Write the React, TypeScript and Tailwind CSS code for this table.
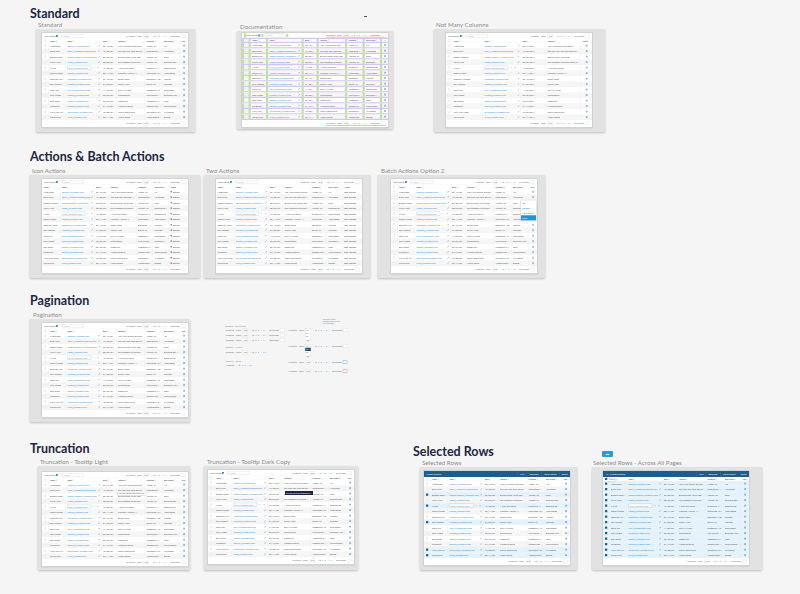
import React from 'react';
import { Search, Pencil, Check as CheckMark, X, Trash2, FileText, EllipsisVertical } from 'lucide-react';

type V = 'standard' | 'doc' | 'few' | 'icon' | 'two' | 'batch' | 'tipLight' | 'tipDark' | 'selected' | 'all';

type Col = { key: string; label: string; w: string };

const people = [
    ['Matt Simes', 'msimes@example.com', '05/19/2017', '123 Main Street, Building 4', 'Austin, TX', 'HR'],
    ['Brian Gary', 'bgary@longemailaddress.com', '12/28/2017', 'The Red and Gold Building on 5th Street', 'Long Beach, CA', 'Marketing'],
    ['Debbie Sanders', 'debbie.sanders@example.com', '06/06/2017', 'Burnet Road, Suite 200', 'Atlanta, GA', 'Sales'],
    ['Kevin Hess', 'khess@example.com', '08/09/2017', 'The Shoppes at Round Rock Plaza', 'Atlanta, GA', 'Business Development'],
    ['Li Feld', 'lfeld@example.com', '12/28/2017', '1 Pine Oak Drive', 'Evansville, IN', 'Engineering'],
    ['Sandra Lopez', 'slopez@example.com', '03/14/2017', 'Lakeside Avenue 44', 'Cincinnati, OH', 'Accounting'],
    ['Roberto Martinez', 'rmartinez@example.com', '07/12/2017', 'Beach Road', 'Baltimore, MD', 'Finance'],
    ['Ron Watson', 'rwatson@example.com', '01/30/2017', 'Cherry Lane', 'Dallas, TX', 'Facilities'],
    ['Steve Lee', 'slee@examplemail.com', '11/02/2017', 'Oak Hill Plaza', 'Scottsdale, AZ', 'Operations'],
    ['Tina Knight', 'tknight@example.com', '05/05/2017', 'Cornerstone', 'Fort Worth, TX', 'Business Analysis'],
    ['Dan Smith', 'dsmith@example.com', '09/22/2017', 'Ridgeview', 'Kingsport, TN', 'Legal'],
    ['Pat Doran', 'pdoran@example.com', '04/17/2017', 'Meadows Drive', 'Oregon City, OR', 'Procurement'],
    ['Mary Van Kamp', 'mvankamp@example.com', '10/08/2017', 'Cherry Boulevard', 'Columbus, OH', 'IT Support'],
    ['Carlos Ruiz', 'cruiz@example.com', '02/11/2017', 'Maple Street', 'Albuquerque, NM', 'Design'],
];

const colsStd: Col[] = [
    { key: 'chk', label: '', w: 'w-[26px]' },
    { key: 'name', label: 'Name', w: 'w-[70px]' },
    { key: 'email', label: 'Email', w: 'w-[142px]' },
    { key: 'date', label: 'Date', w: 'w-[60px]' },
    { key: 'addr', label: 'Address', w: 'w-[114px]' },
    { key: 'loc', label: 'Location', w: 'w-[70px]' },
    { key: 'group', label: 'Bus Group', w: 'w-[70px]' },
    { key: 'act', label: 'Action', w: 'flex-1' },
];

const colsFew: Col[] = [
    { key: 'chk', label: '', w: 'w-[24px]' },
    { key: 'name', label: 'Name', w: 'w-[124px]' },
    { key: 'email', label: 'Email', w: 'w-[152px]' },
    { key: 'date', label: 'Date', w: 'w-[100px]' },
    { key: 'addr', label: 'Address', w: 'w-[140px]' },
    { key: 'act', label: 'Action', w: 'flex-1' },
];

const colsAct: Col[] = [
    { key: 'name', label: 'Name', w: 'w-[74px]' },
    { key: 'email', label: 'Email', w: 'w-[136px]' },
    { key: 'date', label: 'Date', w: 'w-[58px]' },
    { key: 'addr', label: 'Address', w: 'w-[110px]' },
    { key: 'loc', label: 'Location', w: 'w-[66px]' },
    { key: 'group', label: 'Bus Group', w: 'w-[64px]' },
    { key: 'act', label: 'Action', w: 'flex-1' },
];

const Box = ({ on }: { on?: boolean }) => (
    <span className={on ? 'block w-[9px] h-[9px] rounded-[2px] bg-[#1f5b8e]' : 'block w-[9px] h-[9px] rounded-[2px] border border-[#c2c2c2] bg-white'} />
);

const Pager = ({ show = true, go = true, goState = '', menu = '' }: { show?: boolean; go?: boolean; goState?: string; menu?: string }) => (
    <div className="flex items-center h-[14px] gap-[5px] text-[8px] text-[#666] whitespace-nowrap">
        <span>10 Results</span>
        {show && (
            <>
                <span className="ml-[3px]">Show</span>
                <span className="relative flex items-center justify-between w-[22px] h-[14px] px-[3px] border border-[#c8c8c8] bg-white rounded-[2px]">
                    10<span className="text-[6px]">▾</span>
                    {menu && (
                        <span className="absolute left-[-1px] top-[-1px] w-[24px] flex flex-col bg-white border border-[#c8c8c8] shadow-[0_1px_3px_rgba(0,0,0,0.25)] text-[7px]">
                            {['10', '25', '50', '100'].map((n, k) => (
                                <span key={n} className={menu === 'sel' && k === 1 ? 'h-[13px] px-[3px] leading-[13px] bg-[#1f4f80] text-white' : 'h-[13px] px-[3px] leading-[13px]'}>{n}</span>
                            ))}
                        </span>
                    )}
                </span>
            </>
        )}
        <span className="ml-[6px] flex items-center gap-[6px] text-[#2f7fc2]">
            <span>‹</span><span className="font-bold text-[#333]">1</span><span>2</span><span>3</span><span>4</span><span>5</span><span>›</span>
        </span>
        {go && (
            <>
                <span className="ml-[6px]">Go to page</span>
                <span className={goState === 'focus' ? 'w-[18px] h-[14px] rounded-[2px] bg-white border-2 border-[#6aa9e0]' : goState === 'error' ? 'w-[18px] h-[14px] rounded-[2px] bg-white border-2 border-[#e07a7a]' : 'w-[18px] h-[14px] rounded-[2px] bg-white border border-[#c8c8c8]'} />
            </>
        )}
    </div>
);

function cell(key: string, row: string[], i: number, v: V, on: boolean) {
    switch (key) {
        case 'chk':
            return <span className="mx-auto"><Box on={on} /></span>;
        case 'name':
            return <span className="truncate">{row[0]}</span>;
        case 'email':
            if (i === 4)
                return (
                    <>
                        <span className="flex items-center w-[96px] h-[15px] px-[3px] border border-[#6aa9e0] rounded-[2px] bg-white text-[#999] truncate">{row[1]}</span>
                        <CheckMark size={9} strokeWidth={3} className="ml-[6px] shrink-0 text-[#3aa657]" />
                        <X size={9} strokeWidth={3} className="ml-[8px] shrink-0 text-[#d9534f]" />
                    </>
                );
            return (
                <>
                    <span className="truncate text-[#3a8bd0]">{row[1]}</span>
                    <Pencil size={8} strokeWidth={2.5} className="ml-auto shrink-0 text-[#2f7fc2]" />
                </>
            );
        case 'date':
            return <span className="truncate">{row[2]}</span>;
        case 'addr':
            return <span className="truncate">{row[3]}</span>;
        case 'loc':
            return <span className="truncate">{row[4]}</span>;
        case 'group':
            return <span className="truncate">{row[5]}</span>;
        default:
            if (v === 'icon')
                return (
                    <span className="flex items-center gap-[3px] text-[#444]">
                        <Trash2 size={8} strokeWidth={2.5} className="shrink-0" />Delete
                    </span>
                );
            if (v === 'two')
                return (
                    <span className="flex items-center gap-[5px] text-[#444]">
                        <span>Edit</span><span>Delete</span>
                    </span>
                );
            if (v === 'batch') return <EllipsisVertical size={10} strokeWidth={3} className="mx-auto text-[#2f7fc2]" />;
            return <FileText size={9} strokeWidth={2.5} className="mx-auto text-[#2f7fc2]" />;
    }
}

const Table = ({ v }: { v: V }) => {
    const cols = v === 'few' ? colsFew : v === 'icon' || v === 'two' ? colsAct : colsStd;
    const doc = v === 'doc';
    const selBar = v === 'selected' || v === 'all';
    const sel = (i: number) => v === 'all' || (v === 'selected' && [2, 4, 7, 12, 13].includes(i));
    const cellBase = 'flex items-center h-full px-[5px] overflow-hidden shrink-0 border-r border-r-[#e6e6e6] last:border-r-0 ';
    const docCell = doc ? 'border-l-[9px] border-l-[#bfe39c] ' : '';
    const rowLine = doc ? ' border-b-[5px] border-b-[#d4c5f4]' : ' border-b border-b-[#ececec]';

    return (
        <div className="w-[146px] h-[94px] overflow-hidden bg-white ring-1 ring-[#d2d2d2] shadow-[0_1px_2px_rgba(0,0,0,0.15)]">
            <div className="relative w-[584px] h-[376px] origin-top-left scale-25 bg-white text-[9px] text-[#555] font-['Lato',sans-serif]">
                {selBar ? (
                    <div className="flex items-center h-[24px] pl-[10px] bg-[#1f5b8e] text-white text-[8px]">
                        <span>{v === 'all' ? 'All 140 Items Selected' : '5 Items Selected'}</span>
                        <div className="ml-auto flex h-full">
                            {['Save', 'Download', 'Add to Project', 'Delete'].map((b) => (
                                <span key={b} className="flex items-center px-[10px] border-l border-l-[#4a7fb0]">{b}</span>
                            ))}
                        </div>
                    </div>
                ) : (
                    <div className={'flex items-center h-[24px] pl-[8px] pr-[10px]' + rowLine}>
                        <span className={'flex items-center h-full gap-[3px] text-[8px] text-[#555] ' + docCell}>
                            Filter Results
                            <span className="w-[8px] h-[8px] rounded-[1px] bg-[#2f7fc2] text-white text-[6px] leading-[8px] text-center">▾</span>
                        </span>
                        <span className={'ml-[12px] flex items-center gap-[3px] w-[92px] h-[13px] px-[3px] border border-[#c4c4c4] rounded-[2px] text-[7px] text-[#aaa]' + (doc ? ' shadow-[-8px_0_0_#bfe39c,8px_0_0_#bfe39c]' : '')}>
                            <Search size={6} />Search
                        </span>
                        <div className={'ml-auto' + (doc ? ' border-b-[3px] border-b-[#f2a3a3]' : '')}>
                            <Pager />
                        </div>
                    </div>
                )}

                <div className={'flex h-[16px] text-[8px] font-bold text-[#555] bg-white' + rowLine}>
                    {cols.map((c) => (
                        <div key={c.key} className={cellBase + docCell + c.w}>
                            {c.key === 'chk' ? (
                                <span className="mx-auto"><Box on={v === 'all'} /></span>
                            ) : (
                                <span className="truncate">
                                    {c.label}
                                    {c.key !== 'act' && <span className="ml-[2px] font-normal text-[#2f7fc2]">↕</span>}
                                </span>
                            )}
                        </div>
                    ))}
                </div>

                {people.map((row, i) => (
                    <div
                        key={row[0]}
                        className={'flex h-[22px]' + rowLine + (sel(i) ? ' bg-[#e4f3fb]' : i % 2 ? ' bg-[#f6f6f6]' : ' bg-white')}
                    >
                        {cols.map((c) => (
                            <div key={c.key} className={cellBase + docCell + c.w}>
                                {cell(c.key, row, i, v, sel(i))}
                            </div>
                        ))}
                    </div>
                ))}

                <div className="flex items-center justify-end h-[28px] px-[10px]">
                    <div className={doc ? 'border-b-[3px] border-b-[#f2a3a3]' : ''}>
                        <Pager />
                    </div>
                </div>

                {v === 'tipLight' && (
                    <div className="absolute left-[302px] top-[80px] w-[116px] h-[13px] px-[4px] bg-white border border-[#c9c9c9] shadow-[0_1px_3px_rgba(0,0,0,0.2)] text-[7px] leading-[11px] text-[#555] truncate">
                        The Red and Gold Building on 5th Street
                    </div>
                )}
                {v === 'tipDark' && (
                    <div className="absolute left-[308px] top-[84px] w-[112px] h-[16px] px-[4px] bg-[#1c2340] text-[7px] leading-[16px] text-white truncate">
                        The Red and Gold Building on 5th Street
                    </div>
                )}
                {v === 'batch' && (
                    <div className="absolute left-[519px] top-[84px] w-[62px] flex flex-col bg-white border border-[#c9c9c9] shadow-[0_1px_4px_rgba(0,0,0,0.25)] text-[7px] text-[#2f7fc2]">
                        {['Edit', 'Download', 'Add to Project', 'Delete'].map((m) => (
                            <span key={m} className={m === 'Delete' ? 'h-[20px] px-[5px] leading-[20px] bg-[#1d95d6] text-white' : 'h-[20px] px-[5px] leading-[20px]'}>{m}</span>
                        ))}
                    </div>
                )}
                {v === 'all' && (
                    <div className="absolute left-[20px] top-[28px] px-[3px] h-[14px] bg-white border border-[#c9c9c9] shadow-[0_1px_3px_rgba(0,0,0,0.25)] text-[6px] leading-[12px] text-[#555]">
                        Select all
                    </div>
                )}
            </div>
        </div>
    );
};

const Caption = ({ children, className = '' }: { children: React.ReactNode; className?: string }) => (
    <div className={'h-[10px] text-[7px] leading-[10px] text-[#888] ' + className}>{children}</div>
);

const PagerVariants = () => (
    <div className="w-[150px] h-[60px] overflow-hidden">
        <div className="flex w-[600px] h-[240px] origin-top-left scale-25 font-['Lato',sans-serif]">
            <div className="w-[251px] shrink-0 pt-[28px]">
                <Caption>Pagination – Show &amp; Go To</Caption>
                <div className="mt-[3px]"><Pager /></div>
                <div className="mt-[6px]"><Pager /></div>
                <div className="mt-[6px]"><Pager /></div>
                <Caption className="mt-[16px]">Pagination – No Go To</Caption>
                <div className="mt-[8px]"><Pager go={false} /></div>
                <Caption className="mt-[24px]">Pagination – Minimal</Caption>
                <div className="mt-[4px]"><Pager show={false} go={false} /></div>
            </div>
            <div className="w-[250px] shrink-0">
                <div className="ml-[140px] h-[24px] text-[6px] leading-[8px] text-[#777]">
                    Select Type: "menu"<br />Dropdown opens over the<br />current selection
                </div>
                <div className="mt-[17px]"><Pager menu="open" /></div>
                <div className="mt-[50px]"><Pager menu="sel" /></div>
                <div className="mt-[50px]"><Pager goState="focus" /></div>
                <div className="mt-[22px]"><Pager goState="error" /></div>
            </div>
        </div>
    </div>
);

const Title = ({ children }: { children: React.ReactNode }) => (
    <h2 className="h-[13px] text-[12.5px] leading-[13px] font-bold text-[#1b2542] whitespace-nowrap">{children}</h2>
);

const Board = ({ label, lab = '', box, className = '', children }: { label: string; lab?: string; box: string; className?: string; children?: React.ReactNode }) => (
    <div className={'relative shrink-0 ' + className}>
        <div className={'h-[9px] text-[6.2px] leading-[9px] text-[#8b8b8b] whitespace-nowrap ' + lab}>{label}</div>
        <div className={'bg-[#e2e2e2] shadow-[0_1px_2px_rgba(0,0,0,0.22)] ' + box}>{children}</div>
    </div>
);

export default function App() {
    return (
        <div className="relative w-[800px] h-[594px] overflow-hidden bg-[#f5f5f5] font-['Lato',sans-serif]">
            <span className="absolute left-[364px] top-[16px] w-[3px] h-[1px] bg-[#555]" />

            {/* Standard */}
            <section className="h-[145px] pl-[30px] pt-[7px]">
                <Title>Standard</Title>
                <div className="flex items-start ml-[6px]">
                    <Board label="Standard" lab="ml-[2px]" box="w-[159px] h-[103px] pl-[6px] pt-[4px]">
                        <Table v="standard" />
                    </Board>
                    <Board label="Documentation" lab="ml-[3px]" className="ml-[42px] mt-[2px]" box="w-[156px] h-[98px] pl-[5px] pt-[2px]">
                        <Table v="doc" />
                    </Board>
                    <Board label="Not Many Columns" lab="ml-[2px]" className="ml-[41px]" box="w-[171px] h-[103px] pl-[12px] pt-[4px]">
                        <Table v="few" />
                    </Board>
                </div>
            </section>

            {/* Actions */}
            <section className="h-[145px] pl-[30px] pt-[5px]">
                <Title>Actions &amp; Batch Actions</Title>
                <div className="flex items-start mt-[3px]">
                    <Board label="Icon Actions" lab="ml-[2px]" box="w-[170px] h-[103px] pl-[12px] pt-[4px]">
                        <Table v="icon" />
                    </Board>
                    <Board label="Two Actions" lab="ml-[2px]" className="ml-[4px]" box="w-[166px] h-[103px] pl-[12px] pt-[4px]">
                        <Table v="two" />
                    </Board>
                    <Board label="Batch Actions Option 2" lab="ml-[3px]" className="ml-[8px]" box="w-[167px] h-[103px] pl-[13px] pt-[4px]">
                        <Table v="batch" />
                    </Board>
                </div>
            </section>

            {/* Pagination */}
            <section className="h-[148px] pl-[30px] pt-[4px]">
                <Title>Pagination</Title>
                <div className="flex items-start mt-[3px]">
                    <Board label="Pagination" lab="ml-[3px]" box="w-[160px] h-[103px] pl-[12px] pt-[4px]">
                        <Table v="standard" />
                    </Board>
                    <div className="ml-[35px] mt-[8px]">
                        <PagerVariants />
                    </div>
                </div>
            </section>

            {/* Truncation + Selected */}
            <section className="flex">
                <div className="w-[413px] shrink-0 pl-[30px] pt-[4px]">
                    <Title>Truncation</Title>
                    <div className="flex items-start ml-[8px] mt-[2px]">
                        <Board label="Truncation - Tooltip Light" lab="ml-[2px]" box="w-[152px] h-[104px] pl-[4px] pt-[6px]">
                            <Table v="tipLight" />
                        </Board>
                        <Board label="Truncation - Tooltip Dark Copy" lab="ml-[3px]" className="ml-[14px]" box="w-[154px] h-[104px] pl-[4px] pt-[4px]">
                            <Table v="tipDark" />
                        </Board>
                    </div>
                </div>
                <div className="pt-[7px]">
                    <Title>Selected Rows</Title>
                    <div className="flex items-start ml-[7px]">
                        <Board label="Selected Rows" lab="ml-[2px]" box="w-[157px] h-[103px] pl-[4px] pt-[4px]">
                            <Table v="selected" />
                        </Board>
                        <Board label="Selected Rows - Across All Pages" lab="ml-[1px]" className="ml-[15px]" box="w-[170px] h-[103px] pl-[11px] pt-[4px]">
                            <span className="absolute left-[10px] top-[-7px] flex items-center justify-center w-[11px] h-[6px] rounded-[1px] bg-[#2b9be0]">
                                <span className="w-[3px] h-[1px] bg-white" />
                            </span>
                            <Table v="all" />
                        </Board>
                    </div>
                </div>
            </section>
        </div>
    );
}
